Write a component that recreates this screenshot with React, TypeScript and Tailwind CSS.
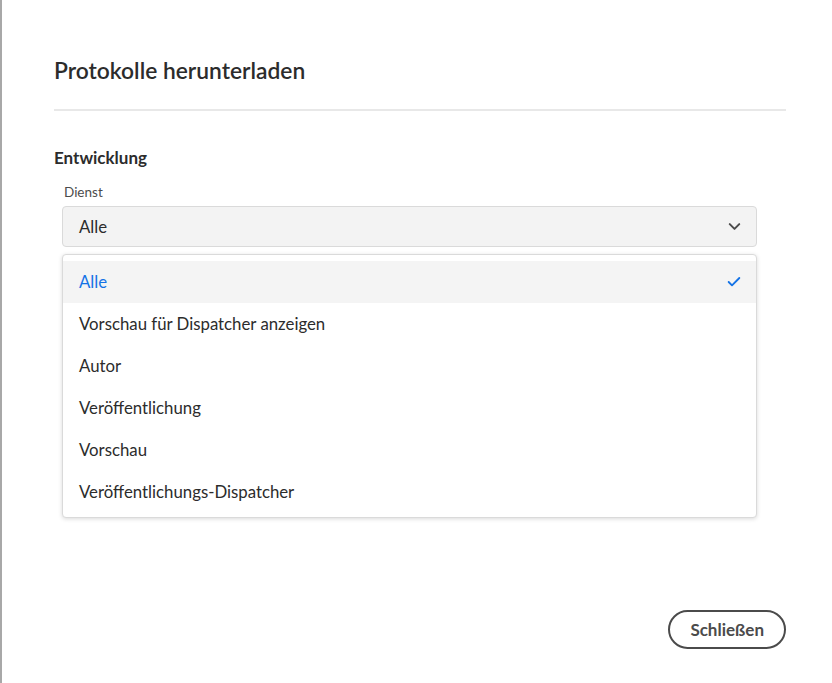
import { Check, ChevronDown } from "lucide-react";

const options = [
  "Alle",
  "Vorschau für Dispatcher anzeigen",
  "Autor",
  "Veröffentlichung",
  "Vorschau",
  "Veröffentlichungs-Dispatcher",
];

export default function App() {
  const selected = "Alle";
  return (
    <div className="h-[683px] w-[832px] bg-white border-l-2 border-[#a8a8a8] font-['Lato',sans-serif] text-[#2c2c2c]">
      <div className="pl-[52px] pr-[46px] pt-[56px]">
        <h1 className="text-[22.8px] leading-[28px] font-semibold text-[#2c2c2c]">Protokolle herunterladen</h1>
        <div className="mt-[25px] h-[2px] bg-[#e8e8e8]" />

        <h2 className="mt-[37px] text-[17px] leading-[20px] font-bold text-[#2c2c2c]">Entwicklung</h2>

        <div className="ml-[8px] mr-[29px] mt-[16px]">
          <label className="block text-[13.5px] leading-[16px] text-[#4b4b4b] pl-[2px]">Dienst</label>
          <button className="mt-[6px] flex h-[41px] w-full items-center justify-between rounded-[4px] border border-[#dadada] bg-[#f3f3f3] pl-[16px] pr-[12px] text-left text-[16.8px] text-[#2c2c2c]">
            <span>{selected}</span>
            <ChevronDown size={19} strokeWidth={2.5} className="text-[#4b4b4b]" />
          </button>

          <ul className="mt-[7px] rounded-[4px] border border-[#dadada] bg-white pt-[6px] pb-[4px] shadow-[0_1px_4px_rgba(0,0,0,0.15)]">
            {options.map((o) => {
              const active = o === selected;
              return (
                <li
                  key={o}
                  className={
                    active
                      ? "flex h-[42px] items-center justify-between bg-[#f4f4f4] pl-[16px] pr-[14px] text-[16.8px] text-[#1473e6]"
                      : "flex h-[42px] items-center justify-between pl-[16px] pr-[14px] text-[16.8px] text-[#2c2c2c]"
                  }
                >
                  <span>{o}</span>
                  {active && <Check size={16} strokeWidth={2.8} className="text-[#1473e6]" />}
                </li>
              );
            })}
          </ul>
        </div>

        <div className="mt-[92px] flex justify-end">
          <button className="h-[39px] rounded-full border-2 border-[#4b4b4b] px-[20px] text-[17px] font-bold text-[#4b4b4b]">
            Schließen
          </button>
        </div>
      </div>
    </div>
  );
}
